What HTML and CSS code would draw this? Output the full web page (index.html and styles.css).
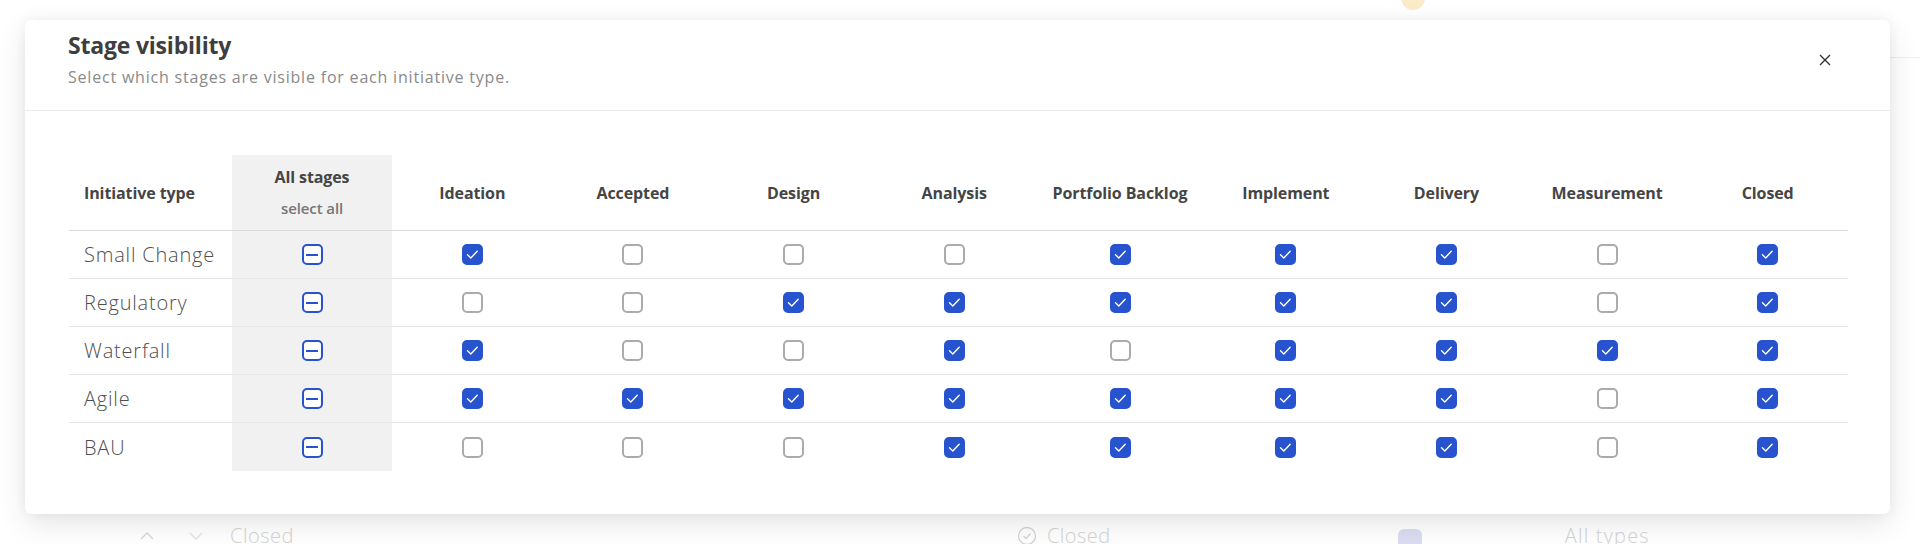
FILE: index.html
```html
<!DOCTYPE html>
<html lang="en">
<head>
<meta charset="utf-8">
<title>Stage visibility</title>
<link rel="stylesheet" href="styles.css">
</head>
<body>
<div class="page">
  <header class="page-top"><span class="avatar"></span><span class="top-line"></span></header>
  <div class="page-row">
    <svg class="chev" viewBox="0 0 16 16" width="16" height="16"><path d="M2 11 L8 5 L14 11" fill="none" stroke="#d6d6d6" stroke-width="1.4"/></svg>
    <svg class="chev chev2" viewBox="0 0 16 16" width="16" height="16"><path d="M2 5 L8 11 L14 5" fill="none" stroke="#e2e2e2" stroke-width="1.4"/></svg>
    <span class="bg-text bg-closed">Closed</span>
    <svg class="bg-icon" viewBox="0 0 20 20" width="20" height="20"><circle cx="10" cy="10" r="8.5" fill="none" stroke="#d4d4d4" stroke-width="1.3"/><path d="M6.5 10 L9 12.5 L13.5 7.5" fill="none" stroke="#d4d4d4" stroke-width="1.3"/></svg>
    <span class="bg-text bg-closed2">Closed</span>
    <span class="swatch"></span>
    <span class="bg-text bg-types">All types</span>
  </div>
</div>

<div class="modal">
  <div class="modal-head">
    <div class="head-text">
      <h2 class="title">Stage visibility</h2>
      <p class="subtitle">Select which stages are visible for each initiative type.</p>
    </div>
    <button class="close" aria-label="Close">
      <svg viewBox="0 0 12 12" width="12" height="12"><path d="M1 1 L11 11 M11 1 L1 11" stroke="#333" stroke-width="1.4" fill="none"/></svg>
    </button>
  </div>
  <div class="modal-body">
    <div class="grid">
      <div class="hc first">Initiative type</div>
      <div class="hc all"><span class="all-title">All stages</span><span class="all-sub">select all</span></div>
      <div class="hc">Ideation</div>
      <div class="hc">Accepted</div>
      <div class="hc">Design</div>
      <div class="hc">Analysis</div>
      <div class="hc">Portfolio Backlog</div>
      <div class="hc">Implement</div>
      <div class="hc">Delivery</div>
      <div class="hc">Measurement</div>
      <div class="hc">Closed</div>

      <div class="c first">Small Change</div>
      <div class="c all"><span class="cb mixed"></span></div>
      <div class="c"><span class="cb on"><svg viewBox="0 0 17 17"><path d="M3.5 8.8 L6.8 12 L13.2 5.3"/></svg></span></div>
      <div class="c"><span class="cb"></span></div>
      <div class="c"><span class="cb"></span></div>
      <div class="c"><span class="cb"></span></div>
      <div class="c"><span class="cb on"><svg viewBox="0 0 17 17"><path d="M3.5 8.8 L6.8 12 L13.2 5.3"/></svg></span></div>
      <div class="c"><span class="cb on"><svg viewBox="0 0 17 17"><path d="M3.5 8.8 L6.8 12 L13.2 5.3"/></svg></span></div>
      <div class="c"><span class="cb on"><svg viewBox="0 0 17 17"><path d="M3.5 8.8 L6.8 12 L13.2 5.3"/></svg></span></div>
      <div class="c"><span class="cb"></span></div>
      <div class="c"><span class="cb on"><svg viewBox="0 0 17 17"><path d="M3.5 8.8 L6.8 12 L13.2 5.3"/></svg></span></div>

      <div class="c first">Regulatory</div>
      <div class="c all"><span class="cb mixed"></span></div>
      <div class="c"><span class="cb"></span></div>
      <div class="c"><span class="cb"></span></div>
      <div class="c"><span class="cb on"><svg viewBox="0 0 17 17"><path d="M3.5 8.8 L6.8 12 L13.2 5.3"/></svg></span></div>
      <div class="c"><span class="cb on"><svg viewBox="0 0 17 17"><path d="M3.5 8.8 L6.8 12 L13.2 5.3"/></svg></span></div>
      <div class="c"><span class="cb on"><svg viewBox="0 0 17 17"><path d="M3.5 8.8 L6.8 12 L13.2 5.3"/></svg></span></div>
      <div class="c"><span class="cb on"><svg viewBox="0 0 17 17"><path d="M3.5 8.8 L6.8 12 L13.2 5.3"/></svg></span></div>
      <div class="c"><span class="cb on"><svg viewBox="0 0 17 17"><path d="M3.5 8.8 L6.8 12 L13.2 5.3"/></svg></span></div>
      <div class="c"><span class="cb"></span></div>
      <div class="c"><span class="cb on"><svg viewBox="0 0 17 17"><path d="M3.5 8.8 L6.8 12 L13.2 5.3"/></svg></span></div>

      <div class="c first">Waterfall</div>
      <div class="c all"><span class="cb mixed"></span></div>
      <div class="c"><span class="cb on"><svg viewBox="0 0 17 17"><path d="M3.5 8.8 L6.8 12 L13.2 5.3"/></svg></span></div>
      <div class="c"><span class="cb"></span></div>
      <div class="c"><span class="cb"></span></div>
      <div class="c"><span class="cb on"><svg viewBox="0 0 17 17"><path d="M3.5 8.8 L6.8 12 L13.2 5.3"/></svg></span></div>
      <div class="c"><span class="cb"></span></div>
      <div class="c"><span class="cb on"><svg viewBox="0 0 17 17"><path d="M3.5 8.8 L6.8 12 L13.2 5.3"/></svg></span></div>
      <div class="c"><span class="cb on"><svg viewBox="0 0 17 17"><path d="M3.5 8.8 L6.8 12 L13.2 5.3"/></svg></span></div>
      <div class="c"><span class="cb on"><svg viewBox="0 0 17 17"><path d="M3.5 8.8 L6.8 12 L13.2 5.3"/></svg></span></div>
      <div class="c"><span class="cb on"><svg viewBox="0 0 17 17"><path d="M3.5 8.8 L6.8 12 L13.2 5.3"/></svg></span></div>

      <div class="c first">Agile</div>
      <div class="c all"><span class="cb mixed"></span></div>
      <div class="c"><span class="cb on"><svg viewBox="0 0 17 17"><path d="M3.5 8.8 L6.8 12 L13.2 5.3"/></svg></span></div>
      <div class="c"><span class="cb on"><svg viewBox="0 0 17 17"><path d="M3.5 8.8 L6.8 12 L13.2 5.3"/></svg></span></div>
      <div class="c"><span class="cb on"><svg viewBox="0 0 17 17"><path d="M3.5 8.8 L6.8 12 L13.2 5.3"/></svg></span></div>
      <div class="c"><span class="cb on"><svg viewBox="0 0 17 17"><path d="M3.5 8.8 L6.8 12 L13.2 5.3"/></svg></span></div>
      <div class="c"><span class="cb on"><svg viewBox="0 0 17 17"><path d="M3.5 8.8 L6.8 12 L13.2 5.3"/></svg></span></div>
      <div class="c"><span class="cb on"><svg viewBox="0 0 17 17"><path d="M3.5 8.8 L6.8 12 L13.2 5.3"/></svg></span></div>
      <div class="c"><span class="cb on"><svg viewBox="0 0 17 17"><path d="M3.5 8.8 L6.8 12 L13.2 5.3"/></svg></span></div>
      <div class="c"><span class="cb"></span></div>
      <div class="c"><span class="cb on"><svg viewBox="0 0 17 17"><path d="M3.5 8.8 L6.8 12 L13.2 5.3"/></svg></span></div>

      <div class="c first last">BAU</div>
      <div class="c all last"><span class="cb mixed"></span></div>
      <div class="c last"><span class="cb"></span></div>
      <div class="c last"><span class="cb"></span></div>
      <div class="c last"><span class="cb"></span></div>
      <div class="c last"><span class="cb on"><svg viewBox="0 0 17 17"><path d="M3.5 8.8 L6.8 12 L13.2 5.3"/></svg></span></div>
      <div class="c last"><span class="cb on"><svg viewBox="0 0 17 17"><path d="M3.5 8.8 L6.8 12 L13.2 5.3"/></svg></span></div>
      <div class="c last"><span class="cb on"><svg viewBox="0 0 17 17"><path d="M3.5 8.8 L6.8 12 L13.2 5.3"/></svg></span></div>
      <div class="c last"><span class="cb on"><svg viewBox="0 0 17 17"><path d="M3.5 8.8 L6.8 12 L13.2 5.3"/></svg></span></div>
      <div class="c last"><span class="cb"></span></div>
      <div class="c last"><span class="cb on"><svg viewBox="0 0 17 17"><path d="M3.5 8.8 L6.8 12 L13.2 5.3"/></svg></span></div>
    </div>
  </div>
</div>
</body>
</html>
```

FILE: styles.css
```css
html, body {
  margin: 0;
  padding: 0;
  background: #fff;
  overflow: hidden;
}

body {
  font-family: "Open Sans", "Liberation Sans", sans-serif;
  width: 1920px;
  height: 544px;
  position: relative;
}

/* faint background page */
.page {
  height: 544px;
  display: flex;
  flex-direction: column;
  overflow: hidden;
}

.page-top {
  flex: none;
  height: 58px;
  display: flex;
  align-items: flex-start;
  padding-left: 1401px;
}

.avatar {
  width: 24px;
  height: 24px;
  border-radius: 50%;
  background: #fcebc9;
  margin-top: -14px;
}

.top-line {
  margin-left: auto;
  align-self: flex-end;
  width: 40px;
  border-bottom: 1px solid #efefef;
}

.page-row {
  flex: none;
  margin-top: 463px;
  display: flex;
  align-items: center;
  height: 30px;
  padding-left: 139px;
  color: #d2d2d2;
}

.chev { flex: none; }
.chev2 { margin-left: 33px; }

.bg-text {
  font-size: 20px;
  font-weight: 300;
  color: #d3d3d3;
  line-height: 30px;
  letter-spacing: 0.5px;
}

.bg-closed { margin-left: 26px; }
.bg-icon { margin-left: 723px; }
.bg-closed2 { margin-left: 10px; }

.swatch {
  width: 24px;
  height: 28px;
  border-radius: 6px;
  background: #dcdcf2;
  margin-left: 287px;
  margin-top: 14px;
}

.bg-types {
  margin-left: 143px;
  letter-spacing: 1.2px;
}

/* modal */
.modal {
  position: absolute;
  left: 25px;
  top: 20px;
  width: 1865px;
  height: 494px;
  background: #fff;
  border-radius: 6px;
  box-shadow: 0 10px 30px rgba(0, 0, 0, 0.10), 0 0 12px rgba(0, 0, 0, 0.05);
  display: flex;
  flex-direction: column;
}

.modal-head {
  height: 91px;
  box-sizing: border-box;
  border-bottom: 1px solid #ececec;
  padding: 10px 43px 0 43px;
  display: flex;
  justify-content: space-between;
  align-items: flex-start;
}

.title {
  margin: 0;
  font-size: 23px;
  line-height: 30px;
  font-weight: 700;
  color: #3e3e3e;
  letter-spacing: -0.2px;
}

.subtitle {
  margin: 6px 0 0 0;
  font-size: 16px;
  line-height: 22px;
  color: #8a8a8a;
  letter-spacing: 0.8px;
}

.close {
  width: 44px;
  height: 44px;
  margin-top: 8px;
  border: 0;
  background: transparent;
  padding: 0;
  display: flex;
  align-items: center;
  justify-content: center;
  cursor: pointer;
}

.modal-body {
  padding: 44px 42px 0 44px;
}

.grid {
  display: grid;
  grid-template-columns: 163px 160px repeat(4, 1fr) 171px repeat(4, 1fr);
}

.hc {
  height: 76px;
  box-sizing: border-box;
  border-bottom: 1px solid #dadada;
  display: flex;
  align-items: center;
  justify-content: center;
  font-size: 16px;
  font-weight: 700;
  color: #454545;
  white-space: nowrap;
  letter-spacing: -0.1px;
}

.hc.first,
.c.first {
  justify-content: flex-start;
  padding-left: 15px;
}

.hc.all {
  flex-direction: column;
}

.all-title {
  line-height: 24px;
}

.all-sub {
  margin-top: 7px;
  line-height: 24px;
  font-size: 15px;
  font-weight: 600;
  color: #777;
}

.all {
  background: #f1f1f1;
}

.c {
  height: 48px;
  box-sizing: border-box;
  border-bottom: 1px solid #e7e7e7;
  display: flex;
  align-items: center;
  justify-content: center;
}

.c.last {
  border-bottom: 0;
}

.c.first {
  font-size: 20px;
  font-weight: 300;
  color: #4f4f4f;
  letter-spacing: 0.8px;
}

/* checkboxes */
.cb {
  width: 21px;
  height: 21px;
  box-sizing: border-box;
  border: 2px solid #ababab;
  border-radius: 5px;
  background: #fff;
  display: flex;
  align-items: center;
  justify-content: center;
}

.cb.on {
  background: #2853cf;
  border-color: #2853cf;
}

.cb.on svg {
  width: 17px;
  height: 17px;
}

.cb.on path {
  fill: none;
  stroke: #fff;
  stroke-width: 1.4;
  stroke-linecap: round;
  stroke-linejoin: round;
}

.cb.mixed {
  border-color: #2853cf;
  border-width: 2.5px;
}

.cb.mixed::after {
  content: "";
  width: 12px;
  height: 2px;
  background: #2853cf;
}
```
